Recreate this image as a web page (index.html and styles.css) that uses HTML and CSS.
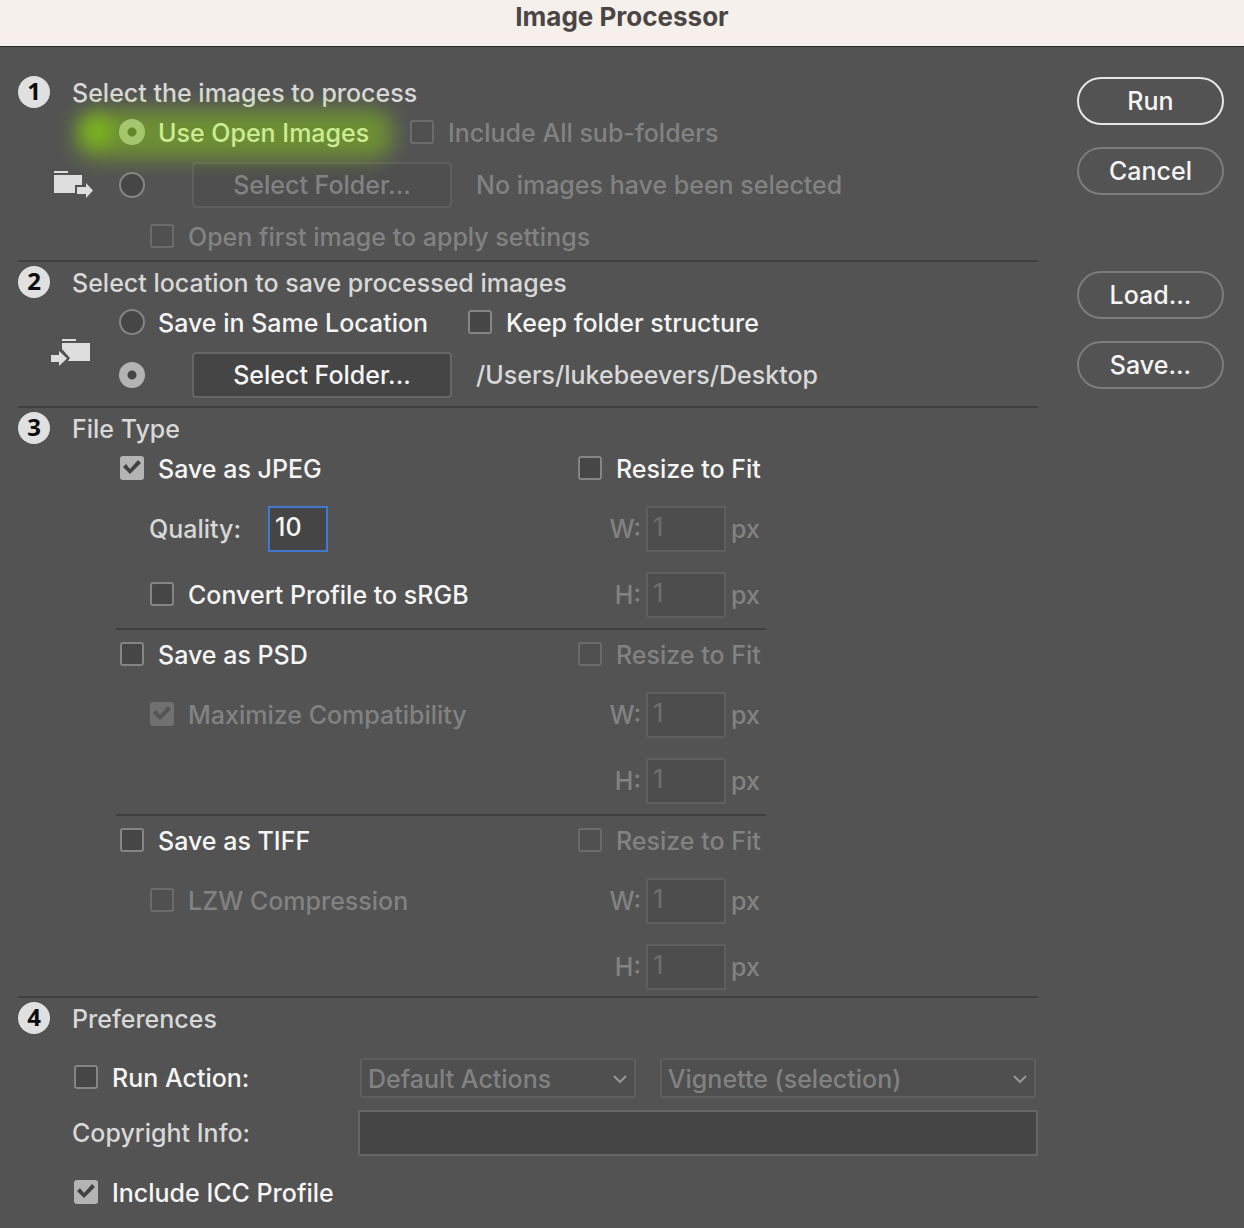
FILE: index.html
```html
<!DOCTYPE html>
<html lang="en">
<head>
<meta charset="utf-8">
<meta name="viewport" content="width=device-width, initial-scale=1">
<title>Image Processor</title>
<link rel="stylesheet" href="styles.css">
</head>
<body>
<header class="titlebar"><h1>Image Processor</h1></header>
<form class="dialog">
  <main class="steps">
    <section class="step">
      <h2 class="heading"><span class="badge">1</span><span class="title">Select the images to process</span></h2>
      <div class="line indent split-source">
        <label class="option highlighted"><input type="radio" name="source" checked><span>Use Open Images</span></label>
        <label class="option off"><input type="checkbox" disabled><span>Include All sub-folders</span></label>
      </div>
      <div class="with-icon tall">
        <svg class="folder-icon" width="42" height="34" viewBox="0 0 42 34" aria-hidden="true">
          <path fill="#dedede" d="M3 3h14v2H3zM3 7h28v10h-7v8H3zM26 19h9v-4l7 7.500-7 7.500v-4h-9z"/>
        </svg>
        <div class="line folder-line">
          <input type="radio" name="source" aria-label="Use a folder">
          <button type="button" class="folder-button" disabled>Select Folder...</button>
          <span class="dim">No images have been selected</span>
        </div>
      </div>
      <div class="line indent deeper open-first">
        <label class="option off"><input type="checkbox" disabled><span>Open first image to apply settings</span></label>
      </div>
    </section>

    <section class="step">
      <h2 class="heading"><span class="badge">2</span><span class="title">Select location to save processed images</span></h2>
      <div class="with-icon save-row">
        <svg class="folder-icon" width="42" height="34" viewBox="0 0 42 34" aria-hidden="true">
          <path fill="#dedede" d="M11 6h14v2H11zM11 10h28v18H17l2-3-8-9zM0 22h8v-4l8 7.500-8 7.500v-4H0z"/>
        </svg>
        <div class="save-lines">
          <div class="line split-save">
            <label class="option"><input type="radio" name="target"><span>Save in Same Location</span></label>
            <label class="option"><input type="checkbox"><span>Keep folder structure</span></label>
          </div>
          <div class="line folder-line tall">
            <input type="radio" name="target" aria-label="Save in a folder" checked>
            <button type="button" class="folder-button">Select Folder...</button>
            <span>/Users/lukebeevers/Desktop</span>
          </div>
        </div>
      </div>
    </section>

    <section class="step">
      <h2 class="heading"><span class="badge">3</span><span class="title">File Type</span></h2>
      <div class="format">
        <label class="option"><input type="checkbox" checked><span>Save as JPEG</span></label>
        <label class="option"><input type="checkbox"><span>Resize to Fit</span></label>
        <div class="sub quality"><label for="quality">Quality:</label><input class="field focused" id="quality" type="text" value="10"></div>
        <div class="size off"><label for="jw">W:</label><input class="field" id="jw" type="text" value="1" disabled><span>px</span></div>
        <label class="option sub"><input type="checkbox"><span>Convert Profile to sRGB</span></label>
        <div class="size off"><label for="jh">H:</label><input class="field" id="jh" type="text" value="1" disabled><span>px</span></div>
      </div>
      <div class="format">
        <label class="option"><input type="checkbox"><span>Save as PSD</span></label>
        <label class="option off"><input type="checkbox" disabled><span>Resize to Fit</span></label>
        <label class="option sub off"><input type="checkbox" checked disabled><span>Maximize Compatibility</span></label>
        <div class="size off"><label for="pw">W:</label><input class="field" id="pw" type="text" value="1" disabled><span>px</span></div>
        <div class="size off"><label for="ph">H:</label><input class="field" id="ph" type="text" value="1" disabled><span>px</span></div>
      </div>
      <div class="format">
        <label class="option"><input type="checkbox"><span>Save as TIFF</span></label>
        <label class="option off"><input type="checkbox" disabled><span>Resize to Fit</span></label>
        <label class="option sub off"><input type="checkbox" disabled><span>LZW Compression</span></label>
        <div class="size off"><label for="tw">W:</label><input class="field" id="tw" type="text" value="1" disabled><span>px</span></div>
        <div class="size off"><label for="th">H:</label><input class="field" id="th" type="text" value="1" disabled><span>px</span></div>
      </div>
    </section>

    <section class="step">
      <h2 class="heading"><span class="badge">4</span><span class="title">Preferences</span></h2>
      <div class="prefs">
        <label class="option"><input type="checkbox"><span>Run Action:</span></label>
        <div class="selects">
          <div class="select">
            <select aria-label="Action set" disabled><option>Default Actions</option></select>
            <svg class="chevron" width="14" height="10" viewBox="0 0 14 10" aria-hidden="true"><path d="M1 2l6 6 6-6" fill="none" stroke="#969696" stroke-width="2"/></svg>
          </div>
          <div class="select">
            <select aria-label="Action" disabled><option>Vignette (selection)</option></select>
            <svg class="chevron" width="14" height="10" viewBox="0 0 14 10" aria-hidden="true"><path d="M1 2l6 6 6-6" fill="none" stroke="#969696" stroke-width="2"/></svg>
          </div>
        </div>
        <label for="copyright">Copyright Info:</label>
        <input class="field" id="copyright" type="text">
        <label class="option icc"><input type="checkbox" checked><span>Include ICC Profile</span></label>
      </div>
    </section>
  </main>
  <aside class="actions">
    <button type="button" class="pill primary">Run</button>
    <button type="button" class="pill">Cancel</button>
    <button type="button" class="pill apart">Load...</button>
    <button type="button" class="pill">Save...</button>
  </aside>
</form>
</body>
</html>
```
FILE: styles.css
```css
* { box-sizing: border-box; }

body {
  margin: 0;
  background: #535353;
  color: #d8d8d8;
  font: 500 25px/32px Inter, "Liberation Sans", sans-serif;
}

button, input, select { font: inherit; margin: 0; }

.titlebar {
  height: 47px;
  border-bottom: 1px solid #2c2a29;
  background: linear-gradient(#f5f0ec 32px, #f9eeeb 33px 41px, #f5f0ee 42px);
  text-align: center;
}
.titlebar h1 {
  margin: 0;
  padding-top: 1px;
  color: #4b4644;
  font-size: 26px;
  font-weight: 700;
  line-height: 32px;
}

.dialog {
  display: flex;
  gap: 39px;
  padding: 25px 20px 16px 18px;
}
.steps { flex: 1; min-width: 0; }
.step + .step { border-top: 2px solid #3e3e3e; }

.heading {
  display: flex;
  align-items: center;
  gap: 22px;
  height: 40px;
  margin: 0;
  font-size: 25px;
  font-weight: 500;
}
.badge {
  width: 32px;
  height: 32px;
  border-radius: 50%;
  background: #e0e0e0;
  color: #0c0c0c;
  font: 700 24px/30px "Open Sans", "Noto Sans", sans-serif;
  text-align: center;
}
.title, .option span { padding-top: 2px; }

.line { display: flex; align-items: center; height: 40px; }
.indent { padding-left: 101px; }
.deeper { padding-left: 131px; }
.split-source, .split-save { display: grid; }
.split-source { grid-template-columns: 290px 1fr; }
.split-save { grid-template-columns: 348px 1fr; }
.tall { margin-top: 10px; }
.open-first { margin: 8px 0 4px; }

.with-icon { display: flex; align-items: center; }
.folder-icon { flex: none; margin: 0 26px 0 33px; }
.folder-line { height: 46px; }
.save-row { padding-bottom: 8px; }
.save-lines { flex: 1; }

.folder-button {
  width: 260px;
  height: 46px;
  margin: 0 24px 0 47px;
  padding: 0;
  border: 2px solid #666;
  border-radius: 4px;
  background: #454545;
  color: #f5f5f5;
}
.folder-button:disabled {
  border-color: #5e5e5e;
  background: #4f4f4f;
  color: #828282;
}
.dim, .off { color: #828282; }

.option {
  display: flex;
  align-items: center;
  gap: 13px;
  color: #f5f5f5;
}
.option.off { color: #828282; }

input[type="radio"], input[type="checkbox"] {
  flex: none;
  appearance: none;
  border: 2px solid #858585;
  background: #464646;
}
input[type="radio"] {
  width: 26px;
  height: 26px;
  border-radius: 50%;
}
input[type="radio"]:checked {
  border: 0;
  background: radial-gradient(circle, #464646 4px, #b4b4b4 5px);
}
input[type="checkbox"] {
  width: 24px;
  height: 24px;
  margin: 0 1px;
  border-radius: 3px;
}
input[type="checkbox"]:disabled {
  border-color: #6b6b6b;
  background: #505050;
}
input[type="checkbox"]:checked {
  border: 0;
  background: #b4b4b4;
}
input[type="checkbox"]:checked:disabled { background: #707070; }
input[type="checkbox"]:checked::before {
  content: "";
  display: block;
  width: 24px;
  height: 24px;
  background: #424242;
  clip-path: polygon(3px 11px, 6px 8px, 10px 13px, 18px 4px, 21px 7px, 10px 18px);
}
input[type="checkbox"]:checked:disabled::before { background: #545454; }

/* green marker glow drawn over the chosen source */
.highlighted { position: relative; }
.highlighted::before, .highlighted::after {
  content: "";
  position: absolute;
  z-index: 1;
  border-radius: 20px;
  background: #91e108;
  pointer-events: none;
}
.highlighted::before {
  inset: -6px 16px -10px -44px;
  opacity: 0.42;
  filter: blur(10px);
}
.highlighted::after {
  top: 0;
  left: -38px;
  width: 32px;
  height: 32px;
  opacity: 0.4;
  filter: blur(8px);
}

.format {
  display: grid;
  grid-template-columns: 458px 1fr;
  grid-template-rows: 36px 46px 46px;
  row-gap: 20px;
  align-items: center;
  max-width: 650px;
  margin-left: 98px;
  padding: 2px 0 10px 3px;
}
.format + .format { padding-top: 6px; border-top: 2px solid #3e3e3e; }
.format:last-child { padding-bottom: 6px; }
.format .size { grid-column: 2; }
.sub { padding-left: 30px; }
.option.sub { padding-bottom: 2px; }
.quality { display: flex; align-items: center; }
.quality label { width: 119px; }
.size { display: flex; align-items: center; gap: 5px; }
.size label { width: 64px; text-align: right; }

.field {
  height: 46px;
  padding: 0 5px 4px;
  border: 2px solid #666;
  border-radius: 0;
  background: #454545;
  color: #f5f5f5;
  outline: 0;
}
.field:disabled {
  width: 80px;
  border-color: #5e5e5e;
  background: #4d4d4d;
  color: #6c6c6c;
}
.field.focused { width: 60px; border-color: #4179d0; }

.prefs {
  display: grid;
  grid-template-columns: 286px 1fr;
  grid-template-rows: 40px 46px 40px;
  row-gap: 12px;
  align-items: center;
  padding: 20px 0 0 54px;
}
.prefs .option { padding: 0 0 2px 1px; }
.selects {
  display: grid;
  grid-template-columns: 11fr 15fr;
  gap: 24px;
  padding: 0 2px;
}
.select { position: relative; }
.select select {
  display: block;
  width: 100%;
  height: 40px;
  padding: 2px 6px 0;
  appearance: none;
  border: 2px solid #5e5e5e;
  border-radius: 3px;
  background: #4f4f4f;
  color: #828282;
  opacity: 1;
}
.chevron { position: absolute; top: 16px; right: 9px; }
.prefs .icc { padding-top: 10px; }

.actions {
  display: flex;
  flex-direction: column;
  flex: none;
  gap: 22px;
  width: 147px;
  padding-top: 5px;
}
.pill {
  height: 48px;
  padding: 0;
  border: 2px solid #7c7c7c;
  border-radius: 24px;
  background: transparent;
  color: #f5f5f5;
}
.pill.primary { border-color: #e6e6e6; }
.pill.apart { margin-top: 54px; }
```
